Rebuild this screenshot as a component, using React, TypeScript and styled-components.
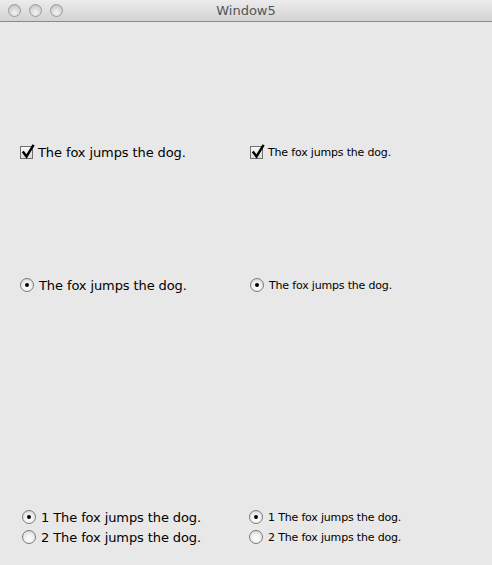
import React from "react";
import styled, { createGlobalStyle } from "styled-components";

const Global = createGlobalStyle`
  html, body { margin: 0; padding: 0; }
  body { background: #e8e8e8; font-family: "DejaVu Sans", "Liberation Sans", sans-serif; }
`;

const Window = styled.div`
  width: 492px;
  height: 565px;
  background: #e8e8e8;
  display: flex;
  flex-direction: column;
  overflow: hidden;
`;

const TitleBar = styled.div`
  height: 21px;
  border-bottom: 1px solid #8a8a8a;
  background: linear-gradient(#ececec, #d3d3d3);
  display: flex;
  align-items: center;
  position: relative;
  padding-left: 8px;
  gap: 8px;
`;

const Light = styled.div`
  width: 13px;
  height: 13px;
  border-radius: 50%;
  box-sizing: border-box;
  border: 1px solid #9a9a9a;
  background: radial-gradient(circle at 50% 70%, #f4f4f4 0%, #d6d6d6 55%, #b8b8b8 100%);
`;

const Title = styled.div`
  position: absolute;
  left: 0;
  right: 0;
  top: 3px;
  text-align: center;
  font-size: 13px;
  color: #555;
  pointer-events: none;
`;

const Content = styled.div`
  display: flex;
  flex-direction: column;
  padding-left: 20px;
`;

const Row = styled.div<{ $top: number }>`
  display: grid;
  grid-template-columns: 229px 1fr;
  margin-top: ${(p) => p.$top}px;
  align-items: center;
`;

const Group = styled.div`
  display: flex;
  flex-direction: column;
`;

const Item = styled.label<{ $small?: boolean; $indent?: number }>`
  display: flex;
  align-items: center;
  height: 20px;
  gap: 5px;
  padding-left: ${(p) => p.$indent ?? 0}px;
  font-size: ${(p) => (p.$small ? 11 : 13)}px;
  letter-spacing: ${(p) => (p.$small ? -0.18 : -0.1)}px;
  color: #000;
  white-space: nowrap;
`;

const Box = styled.span`
  width: 13px;
  height: 13px;
  box-sizing: border-box;
  border: 1px solid #6f6f6f;
  background: linear-gradient(#f6f6f6, #dcdcdc);
  position: relative;
  flex: none;
`;

const Tick = styled.svg`
  position: absolute;
  left: 0;
  top: -3px;
`;

const Radio = styled.span<{ $on?: boolean }>`
  width: 14px;
  height: 14px;
  box-sizing: border-box;
  border-radius: 50%;
  border: 1px solid #7a7a7a;
  background: radial-gradient(circle at 50% 65%, #ffffff 0%, #eeeeee 50%, #c9c9c9 100%);
  display: flex;
  align-items: center;
  justify-content: center;
  flex: none;
  &::after {
    content: "";
    width: 4px;
    height: 4px;
    border-radius: 50%;
    background: #000;
    display: ${(p) => (p.$on ? "block" : "none")};
  }
`;

const Check = () => (
  <Box>
    <Tick width="14" height="15" viewBox="0 0 14 15">
      <path d="M2.5 8.5 L5.5 12.5 L12 2" fill="none" stroke="#000" strokeWidth="2.4" strokeLinecap="square" />
    </Tick>
  </Box>
);

const TEXT = "The fox jumps the dog.";

export default function App() {
  return (
    <Window>
      <Global />
      <TitleBar>
        <Light />
        <Light />
        <Light />
        <Title>Window5</Title>
      </TitleBar>
      <Content>
        <Row $top={120}>
          <Item>
            <Check />
            {TEXT}
          </Item>
          <Item $small $indent={1}>
            <Check />
            {TEXT}
          </Item>
        </Row>
        <Row $top={113}>
          <Item>
            <Radio $on />
            {TEXT}
          </Item>
          <Item $small $indent={1}>
            <Radio $on />
            {TEXT}
          </Item>
        </Row>
        <Row $top={212}>
          <Group>
            <Item $indent={2}>
              <Radio $on />1 {TEXT}
            </Item>
            <Item $indent={2}>
              <Radio />2 {TEXT}
            </Item>
          </Group>
          <Group>
            <Item $small>
              <Radio $on />1 {TEXT}
            </Item>
            <Item $small>
              <Radio />2 {TEXT}
            </Item>
          </Group>
        </Row>
      </Content>
    </Window>
  );
}
